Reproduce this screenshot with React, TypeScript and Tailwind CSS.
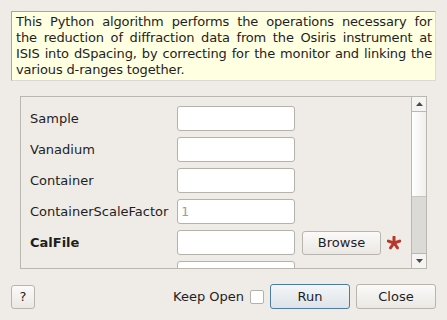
import React from "react";

const description = [
  "This Python algorithm performs the operations necessary for",
  "the reduction of diffraction data from the Osiris instrument at",
  "ISIS into dSpacing, by correcting for the monitor and linking the",
  "various d-ranges together.",
];

const rows = [
  { label: "Sample" },
  { label: "Vanadium" },
  { label: "Container" },
  { label: "ContainerScaleFactor", placeholder: "1" },
  { label: "CalFile", bold: true, browse: true, required: true },
  { label: "" },
];

function Star() {
  return (
    <svg width="14" height="14" viewBox="0 0 14 14" aria-hidden="true">
      <g stroke="#b8372b" strokeWidth="3" strokeLinecap="round">
        <line x1="7" y1="7" x2="7" y2="1" />
        <line x1="7" y1="7" x2="12.7" y2="5.1" />
        <line x1="7" y1="7" x2="10.5" y2="11.9" />
        <line x1="7" y1="7" x2="3.5" y2="11.9" />
        <line x1="7" y1="7" x2="1.3" y2="5.1" />
      </g>
    </svg>
  );
}

function Arrow({ down }: { down?: boolean }) {
  return (
    <svg width="7" height="4" viewBox="0 0 7 4" aria-hidden="true">
      {down ? (
        <polygon points="0,0 7,0 3.5,4" fill="#4a4a4a" />
      ) : (
        <polygon points="0,4 7,4 3.5,0" fill="#4a4a4a" />
      )}
    </svg>
  );
}

export default function App() {
  return (
    <div
      className="w-[447px] h-[320px] bg-[#efebe7] text-[13px] text-[#1e1e1e] overflow-hidden flex flex-col"
      style={{ fontFamily: '"DejaVu Sans", sans-serif' }}
    >
      <div className="mt-[11px] mx-[11px] bg-[#ffffe1] border border-[#a9a6a1] border-r-[#dcd9d4] border-b-[#dcd9d4] pl-[4px] pr-[3px] py-[2px] leading-[16px] tracking-[-0.15px]">
        {description.map((line, i) => (
          <div
            key={i}
            className={
              i < description.length - 1
                ? "whitespace-nowrap text-justify [text-align-last:justify]"
                : "whitespace-nowrap"
            }
          >
            {line}
          </div>
        ))}
      </div>

      <div className="mt-[15px] mx-[20px] h-[173px] border border-[#bab6b0] flex overflow-hidden">
        <div className="flex-1 overflow-hidden pt-[9px] pl-[9px] flex flex-col gap-[6px]">
          {rows.map((r, i) => (
            <div key={i} className="flex items-center h-[25px] shrink-0">
              <div className={`w-[147px] ${r.bold ? "font-bold" : ""}`}>{r.label}</div>
              <div className="w-[118px] h-[25px] bg-white border border-[#b5b1ab] rounded-[3px] flex items-center px-[3px]">
                {r.placeholder && (
                  <span
                    className="text-[#9c9c9c]"
                    style={{ fontFamily: '"DejaVu Sans Mono", monospace' }}
                  >
                    {r.placeholder}
                  </span>
                )}
              </div>
              {r.browse && (
                <div className="ml-[7px] w-[79px] h-[24px] border border-[#b8b4ae] rounded-[3px] bg-gradient-to-b from-[#fbfaf9] to-[#ebe8e4] flex items-center justify-center">
                  Browse
                </div>
              )}
              {r.required && (
                <div className="ml-[6px] flex items-center">
                  <Star />
                </div>
              )}
            </div>
          ))}
        </div>
        <div className="w-[15px] border-l border-[#bab6b0] flex flex-col">
          <div className="h-[15px] border-b border-[#bab6b0] bg-[#f5f4f2] flex items-center justify-center">
            <Arrow />
          </div>
          <div className="h-[84px] bg-gradient-to-r from-white to-[#f1efed]" />
          <div className="flex-1 bg-[#dcdad6] border-t border-[#c8c5c0]" />
          <div className="h-[15px] border-t border-[#bab6b0] bg-[#f5f4f2] flex items-center justify-center">
            <Arrow down />
          </div>
        </div>
      </div>

      <div className="mt-[15px] mx-[11px] flex items-center">
        <div className="w-[24px] h-[24px] border border-[#b8b4ae] rounded-[3px] bg-gradient-to-b from-[#fbfaf9] to-[#ebe8e4] flex items-center justify-center">
          ?
        </div>
        <div className="flex-1" />
        <span>Keep Open</span>
        <div className="ml-[6px] w-[14px] h-[14px] bg-white border border-[#b5b1ab] rounded-[2px]" />
        <div className="ml-[6px] w-[80px] h-[25px] border border-[#4f7ba3] rounded-[3px] bg-gradient-to-b from-[#f4f6f8] to-[#dde3e9] flex items-center justify-center">
          Run
        </div>
        <div className="ml-[6px] w-[80px] h-[25px] border border-[#b8b4ae] rounded-[3px] bg-gradient-to-b from-[#fbfaf9] to-[#ebe8e4] flex items-center justify-center">
          Close
        </div>
      </div>
    </div>
  );
}
